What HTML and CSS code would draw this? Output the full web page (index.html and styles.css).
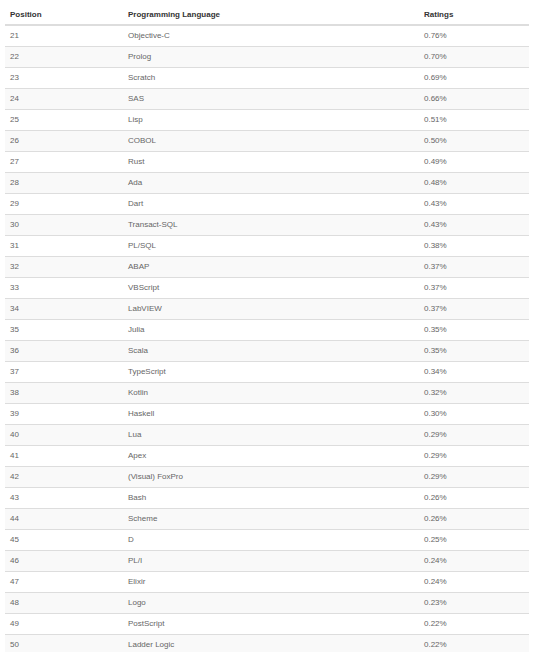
FILE: index.html
```html
<!DOCTYPE html>
<html>
<head>
<meta charset="utf-8">
<link rel="stylesheet" href="styles.css">
</head>
<body>
<table class="ranking">
<colgroup><col class="c-pos"><col class="c-lang"><col class="c-rate"></colgroup>
<thead>
<tr><th>Position</th><th>Programming Language</th><th>Ratings</th></tr>
</thead>
<tbody>
<tr><td>21</td><td>Objective-C</td><td>0.76%</td></tr>
<tr><td>22</td><td>Prolog</td><td>0.70%</td></tr>
<tr><td>23</td><td>Scratch</td><td>0.69%</td></tr>
<tr><td>24</td><td>SAS</td><td>0.66%</td></tr>
<tr><td>25</td><td>Lisp</td><td>0.51%</td></tr>
<tr><td>26</td><td>COBOL</td><td>0.50%</td></tr>
<tr><td>27</td><td>Rust</td><td>0.49%</td></tr>
<tr><td>28</td><td>Ada</td><td>0.48%</td></tr>
<tr><td>29</td><td>Dart</td><td>0.43%</td></tr>
<tr><td>30</td><td>Transact-SQL</td><td>0.43%</td></tr>
<tr><td>31</td><td>PL/SQL</td><td>0.38%</td></tr>
<tr><td>32</td><td>ABAP</td><td>0.37%</td></tr>
<tr><td>33</td><td>VBScript</td><td>0.37%</td></tr>
<tr><td>34</td><td>LabVIEW</td><td>0.37%</td></tr>
<tr><td>35</td><td>Julia</td><td>0.35%</td></tr>
<tr><td>36</td><td>Scala</td><td>0.35%</td></tr>
<tr><td>37</td><td>TypeScript</td><td>0.34%</td></tr>
<tr><td>38</td><td>Kotlin</td><td>0.32%</td></tr>
<tr><td>39</td><td>Haskell</td><td>0.30%</td></tr>
<tr><td>40</td><td>Lua</td><td>0.29%</td></tr>
<tr><td>41</td><td>Apex</td><td>0.29%</td></tr>
<tr><td>42</td><td>(Visual) FoxPro</td><td>0.29%</td></tr>
<tr><td>43</td><td>Bash</td><td>0.26%</td></tr>
<tr><td>44</td><td>Scheme</td><td>0.26%</td></tr>
<tr><td>45</td><td>D</td><td>0.25%</td></tr>
<tr><td>46</td><td>PL/I</td><td>0.24%</td></tr>
<tr><td>47</td><td>Elixir</td><td>0.24%</td></tr>
<tr><td>48</td><td>Logo</td><td>0.23%</td></tr>
<tr><td>49</td><td>PostScript</td><td>0.22%</td></tr>
<tr><td>50</td><td>Ladder Logic</td><td>0.22%</td></tr>
</tbody>
</table>
</body>
</html>
```
FILE: styles.css
```css
html, body {
  margin: 0;
  padding: 0;
  background: #ffffff;
}
body {
  padding: 0 5px;
  font-family: "Liberation Sans", Arial, sans-serif;
  font-size: 8px;
}
.ranking {
  width: 524px;
  border-collapse: collapse;
  table-layout: fixed;
}
.c-pos { width: 118px; }
.c-lang { width: 296px; }
.c-rate { width: 110px; }
.ranking th {
  text-align: left;
  font-weight: bold;
  color: #333333;
  padding: 10px 5px 5px;
  line-height: 9px;
  height: 9px;
  border-bottom: 2px solid #dddddd;
}
.ranking td {
  color: #666666;
  padding: 6px 5px;
  line-height: 8px;
  height: 8px;
  border-top: 1px solid #dddddd;
}
.ranking thead + tbody tr:first-child td {
  border-top: 0;
}
.ranking tbody tr:nth-child(even) td {
  background: #f9f9f9;
}
```
